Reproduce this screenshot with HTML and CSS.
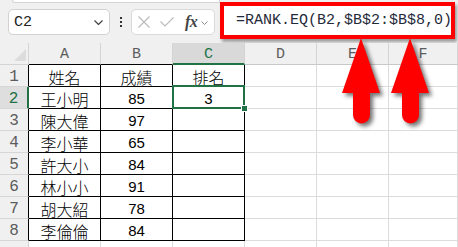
FILE: index.html
```html
<!DOCTYPE html>
<html lang="zh-Hant">
<head>
<meta charset="utf-8">
<title>RANK.EQ</title>
<link rel="stylesheet" href="styles.css">
</head>
<body>
<div class="app">
  <div class="bar">
    <div class="left">
      <div class="ribbon-edge"></div>
      <div class="controls">
        <div class="namebox">
          <span class="ref">C2</span>
          <svg class="chev" width="9" height="5" viewBox="0 0 9 5"><path d="M0.5 0.5 L4.5 4.5 L8.5 0.5" fill="none" stroke="#444" stroke-width="1.2"/></svg>
        </div>
        <div class="dots"><i></i><i></i><i></i></div>
        <div class="fbtns">
          <svg width="12" height="12" viewBox="0 0 12 12"><path d="M0.5 0.5 L11.5 11.5 M11.5 0.5 L0.5 11.5" stroke="#b9b9b9" stroke-width="1.1" fill="none"/></svg>
          <svg width="14" height="10" viewBox="0 0 14 10"><path d="M0.5 4.5 L5 9 L13.5 0.5" stroke="#b9b9b9" stroke-width="1.1" fill="none"/></svg>
          <span class="fx">fx</span>
          <svg class="fchev" width="7" height="4" viewBox="0 0 7 4"><path d="M0.5 0.5 L3.5 3.5 L6.5 0.5" fill="none" stroke="#8a8a8a" stroke-width="1"/></svg>
        </div>
      </div>
    </div>
    <div class="formula">=RANK.EQ(B2,$B$2:$B$8,0)</div>
  </div>

  <div class="sheet">
    <div class="corner"><span class="tri"></span></div>
    <div class="ch dark">A</div>
    <div class="ch dark">B</div>
    <div class="ch sel">C</div>
    <div class="ch">D</div>
    <div class="ch">E</div>
    <div class="ch">F</div>

    <div class="rh">1</div><div class="c t">姓名</div><div class="c t">成績</div><div class="c t">排名</div><div class="g"></div><div class="g"></div><div class="g"></div>
    <div class="rh rsel">2</div><div class="c t">王小明</div><div class="c n">85</div><div class="c n active">3<span class="handle"></span></div><div class="g"></div><div class="g"></div><div class="g"></div>
    <div class="rh">3</div><div class="c t">陳大偉</div><div class="c n">97</div><div class="c"></div><div class="g"></div><div class="g"></div><div class="g"></div>
    <div class="rh">4</div><div class="c t">李小華</div><div class="c n">65</div><div class="c"></div><div class="g"></div><div class="g"></div><div class="g"></div>
    <div class="rh">5</div><div class="c t">許大小</div><div class="c n">84</div><div class="c"></div><div class="g"></div><div class="g"></div><div class="g"></div>
    <div class="rh">6</div><div class="c t">林小小</div><div class="c n">91</div><div class="c"></div><div class="g"></div><div class="g"></div><div class="g"></div>
    <div class="rh">7</div><div class="c t">胡大紹</div><div class="c n">78</div><div class="c"></div><div class="g"></div><div class="g"></div><div class="g"></div>
    <div class="rh">8</div><div class="c t">李倫倫</div><div class="c n">84</div><div class="c"></div><div class="g"></div><div class="g"></div><div class="g"></div>
    <div class="rh last"></div><div class="g"></div><div class="g"></div><div class="g"></div><div class="g"></div><div class="g"></div><div class="g"></div>
  </div>

  <svg class="arrows" width="458" height="247" viewBox="0 0 458 247">
    <path d="M361 38 L380 93 L370 93 L370 115 A8.5 8.5 0 0 1 353 115 L353 93 L342 93 Z" fill="#ff0000"/>
    <path d="M410 38 L429 93 L419 93 L419 115 A8.5 8.5 0 0 1 402 115 L402 93 L391 93 Z" fill="#ff0000"/>
  </svg>
</div>
</body>
</html>
```
FILE: styles.css
```css
* { box-sizing: border-box; }
html, body { margin: 0; padding: 0; }
body { width: 458px; height: 247px; overflow: hidden; background: #f0f0f0; font-family: "Liberation Sans", Arial, sans-serif; }
.app { position: relative; width: 458px; height: 247px; overflow: hidden; }

.bar { display: flex; height: 43px; padding-left: 8px; background: #f0f0f0; }
.left { display: flex; flex-direction: column; width: 212px; }
.ribbon-edge { height: 3px; margin-left: 4px; background: #fff; border: 1px solid #d4d4d4; border-top: none; border-bottom-left-radius: 4px; }
.controls { display: flex; align-items: center; margin-top: 6px; height: 26px; }
.namebox { width: 102px; height: 26px; background: #fff; border: 1px solid #d1d1d1; border-radius: 5px; display: flex; align-items: center; justify-content: space-between; padding: 0 6px 0 5px; }
.ref { font-family: "Liberation Mono", monospace; font-size: 15px; color: #222; }
.chev { margin-top: 1px; }
.dots { width: 21px; height: 26px; display: flex; flex-direction: column; align-items: center; justify-content: center; gap: 2px; }
.dots i { display: block; width: 2px; height: 2px; background: #333; }
.fbtns { width: 84px; height: 26px; background: #fff; border: 1px solid #d9d9d9; border-radius: 5px; display: flex; align-items: center; padding-left: 6px; gap: 10px; }
.fbtns svg:nth-child(2) { margin-left: 0px; }
.fx { font-family: "Liberation Serif", serif; font-style: italic; font-weight: bold; font-size: 16px; color: #444; margin-left: 1px; letter-spacing: -0.5px; }
.fchev { margin-left: -6px; margin-top: 2px; }

.formula { margin-top: 2px; width: 235px; height: 37px; border: 4px solid #ff0000; background: #fff; box-shadow: 2px 3px 3px rgba(0,0,0,0.35); font-family: "Liberation Mono", monospace; font-size: 15px; color: #1f2a3a; padding: 6px 0 0 12px; white-space: nowrap; }

.sheet { display: grid; grid-template-columns: 29px repeat(5, 72px) 1fr; grid-template-rows: 22px repeat(9, 22px); background: #fff; }
.corner { background: #f0f0f0; border-right: 1px solid #d4d4d4; border-bottom: 1px solid #d4d4d4; position: relative; }
.tri { position: absolute; right: 2px; bottom: 3px; width: 0; height: 0; border-left: 12px solid transparent; border-bottom: 12px solid #dcdcdc; }
.ch { background: #f0f0f0; border-right: 1px solid #d4d4d4; border-bottom: 1px solid #c8c8c8; display: flex; align-items: center; justify-content: center; font-family: "Liberation Mono", monospace; font-size: 15px; color: #5c5c5c; padding-top: 2px; }
.ch.dark { border-bottom-color: #000; }
.ch.sel { background: #d9d9d9; border-bottom: 2px solid #217346; color: #217346; }
.rh { background: #f0f0f0; border-right: 1px solid #000; border-bottom: 1px solid #d6d6d6; display: flex; align-items: center; justify-content: center; font-family: "Liberation Mono", monospace; font-size: 16px; color: #5c5c5c; padding-top: 2px; }
.rh.rsel { background: #dedede; border-right: 2px solid #217346; color: #217346; }
.rh.last { border-right-color: #d4d4d4; }
.c { border-right: 1px solid #000; border-bottom: 1px solid #000; display: flex; align-items: center; justify-content: center; color: #000; padding-top: 2px; }
.c.t { font-family: "Noto Sans CJK TC", "Noto Sans CJK SC", sans-serif; font-size: 16px; font-weight: 300; }
.c.n { font-family: "Liberation Sans", Arial, sans-serif; font-size: 15px; }
.g { border-right: 1px solid #dcdcdc; border-bottom: 1px solid #dcdcdc; }
.active { position: relative; }
.active::after { content: ""; position: absolute; top: -2px; left: -1px; right: -1px; bottom: -1px; border: 2px solid #217346; }
.handle { position: absolute; left: 68px; top: 18px; width: 7px; height: 7px; background: #217346; border: 1px solid #fff; z-index: 2; }

.arrows { position: absolute; left: 0; top: 0; pointer-events: none; filter: drop-shadow(3px 3px 2px rgba(0,0,0,0.55)); }
```
